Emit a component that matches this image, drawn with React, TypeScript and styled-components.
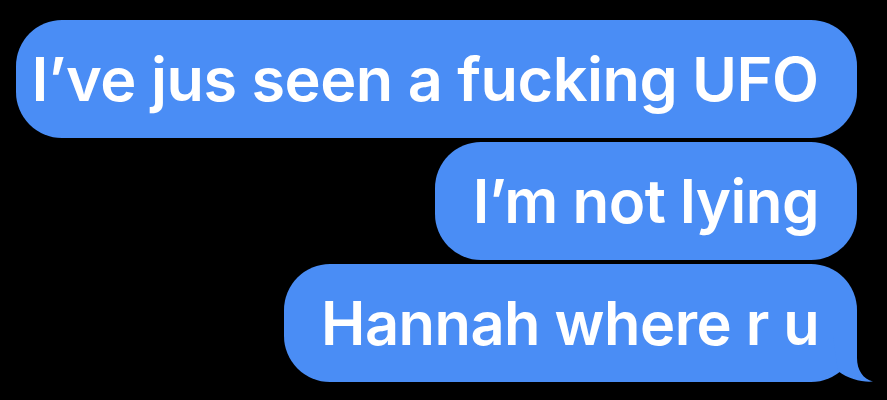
import React from "react";
import styled, { createGlobalStyle } from "styled-components";

const Global = createGlobalStyle`
  html, body { margin: 0; padding: 0; background: #000; }
  body { width: 887px; height: 400px; overflow: hidden; }
`;

const Thread = styled.div`
  display: flex;
  flex-direction: column;
  align-items: flex-end;
  gap: 4px;
  padding: 20px 30px 0 0;
  height: 400px;
  box-sizing: border-box;
  background: #000;
`;

const Bubble = styled.div<{ $width?: number }>`
  position: relative;
  box-sizing: border-box;
  height: 118px;
  ${(p) => (p.$width ? `width: ${p.$width}px;` : "")}
  padding: 0 38px;
  border-radius: 46px;
  background: #4a8df5;
  display: flex;
  align-items: center;
  justify-content: flex-end;
  color: #fff;
  font-family: Inter, "Noto Sans", sans-serif;
  font-weight: 600;
  font-size: 60px;
  line-height: 1;
  letter-spacing: -0.5px;
  white-space: nowrap;
`;

const Label = styled.span<{ $squeeze?: number }>`
  display: inline-block;
  transform: scaleX(${(p) => p.$squeeze ?? 1});
  transform-origin: right center;
`;

const Tail = styled.svg`
  position: absolute;
  right: -16px;
  bottom: 0;
  width: 40px;
  height: 46px;
  overflow: visible;
`;

export default function App() {
  return (
    <>
      <Global />
      <Thread>
        <Bubble $width={841}>
          <Label $squeeze={1.02}>I’ve jus seen a fucking UFO</Label>
        </Bubble>
        <Bubble>
          <Label>I’m not lying</Label>
        </Bubble>
        <Bubble $width={573}>
          <Label $squeeze={0.992}>Hannah where r u</Label>
          <Tail viewBox="0 0 40 46">
            <path
              d="M5 35 L0 0 L24 0 L24 22 C24 34 30 43 40 45.5 C30 46.5 15 43 5 35 Z"
              fill="#4a8df5"
            />
          </Tail>
        </Bubble>
      </Thread>
    </>
  );
}
